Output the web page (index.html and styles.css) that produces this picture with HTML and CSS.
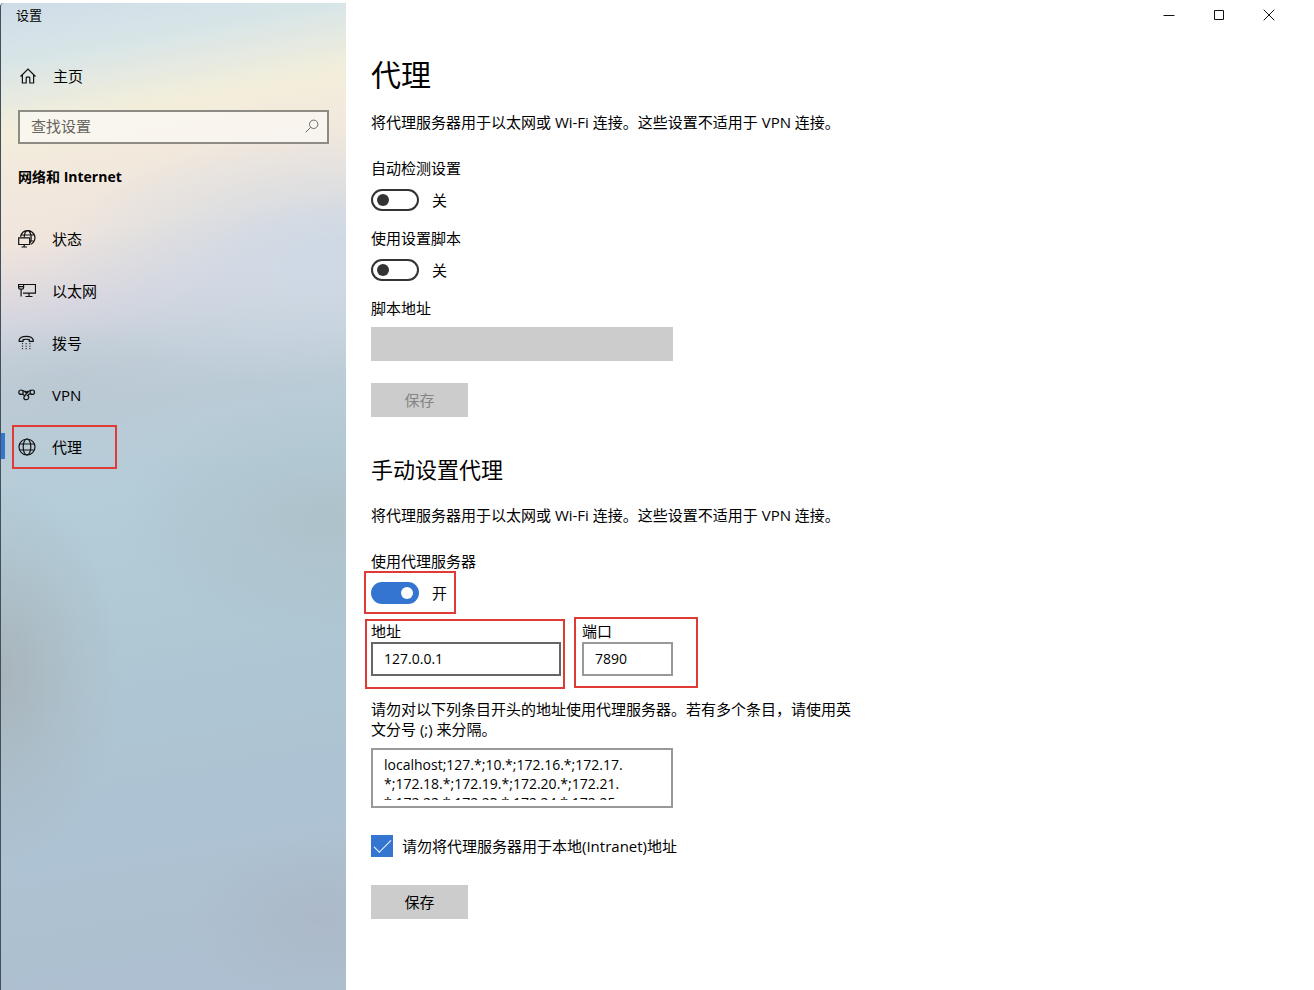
FILE: index.html
```html
<!DOCTYPE html>
<html lang="zh-CN">
<head>
<meta charset="UTF-8">
<meta name="viewport" content="width=device-width, initial-scale=1">
<title>设置</title>
<link rel="stylesheet" href="styles.css">
</head>
<body>
<div class="window">
  <aside class="sidebar">
    <div class="app-title">设置</div>
    <a class="nav-item home" href="#home">
      <svg class="icon" viewBox="0 0 18 18"><path d="M1.500 9.500 9 2l7.500 7.500M3.400 8v8h3.800v-5q0-.8.8-.8h2q.8 0 .8.8v5h3.800V8"/></svg>
      <span>主页</span>
    </a>
    <div class="search">
      <input type="text" placeholder="查找设置" aria-label="查找设置">
      <svg class="search-icon" viewBox="0 0 14 14"><circle cx="8.700" cy="5.300" r="4.200"/><path d="M5.700 8.300.7 13.300"/></svg>
    </div>
    <h2 class="group-title">网络和 Internet</h2>
    <nav class="nav">
      <a class="nav-item" href="#status">
        <svg class="icon" viewBox="0 0 18 18"><path d="M2.600 6.800A7.200 7.200 0 1 1 13 14.200M3.200 5h13M11.800 11h4.400M6.200 7.500C6.400 3.500 8 .6 9.700.6s3.500 3 3.500 7.200c0 2-.3 3.700-.9 5"/><path d="M.7 7.800h11v6.700H.7zM6.200 14.500v2.300M3.500 17h5.500"/></svg>
        <span>状态</span>
      </a>
      <a class="nav-item" href="#ethernet">
        <svg class="icon" viewBox="0 0 18 18"><path d="M6 2.500h11.500v8.700H5M11 11.200v3M7.500 14.500h7M.6 2.500h5v3q0 1.600-1.600 1.600H2.200Q.6 7.100.6 5.500zM.6 4.600h5M3.100 7v7.500"/></svg>
        <span>以太网</span>
      </a>
      <a class="nav-item" href="#dialup">
        <svg class="icon" viewBox="0 0 18 18"><path d="M1.200 7.300V5.800C2 3.200 5 2.300 8.200 2.300s6.200.9 7 3.500v1.500h-3.900V5.700q-3.100-.9-6.200 0v1.600z"/><path class="dots" d="M3.900 9.700h1.200M7.600 9.700h1.200M11.300 9.700h1.200M3.900 12.200h1.200M7.600 12.200h1.200M11.300 12.200h1.200M3.900 14.700h1.200M7.600 14.700h1.200M11.300 14.700h1.200"/></svg>
        <span>拨号</span>
      </a>
      <a class="nav-item" href="#vpn">
        <svg class="icon" viewBox="0 0 18 18"><circle cx="3" cy="6.200" r="2.200"/><circle cx="14.300" cy="6.200" r="2.200"/><path d="M4.500 4.600C6.500 4 7 6.800 8.600 7.300M4.200 8.100c2 .2 1.600 2.100 2.800 1.300l4-4.200q1-1 2-.8M8.800 9.400q2.300 0 1.900 2.200c-.5 2.900-4.800 2.800-4.900.2q0-1.200 1.600-2.600M10 9.500q.8-2.300 3.200-1.500M7.300 5l1.200 1.300L9.700 5"/></svg>
        <span>VPN</span>
      </a>
      <a class="nav-item active" href="#proxy" aria-current="page">
        <svg class="icon" viewBox="0 0 18 18"><circle cx="9" cy="9" r="8"/><ellipse cx="9" cy="9" rx="3.800" ry="8"/><path d="M1.600 6h14.800M1.600 12h14.800"/></svg>
        <span>代理</span>
      </a>
    </nav>
  </aside>

  <main class="content">
    <div class="titlebar">
      <button type="button" aria-label="最小化"><svg viewBox="0 0 12 12"><path d="M.5 6.500h11"/></svg></button>
      <button type="button" aria-label="最大化"><svg viewBox="0 0 12 12"><path d="M1.500 1.500h9v9h-9z"/></svg></button>
      <button type="button" aria-label="关闭"><svg viewBox="0 0 12 12"><path d="m.7.7 10.600 10.600M11.300.7.7 11.300"/></svg></button>
    </div>

    <form class="page">
      <h1>代理</h1>
      <p class="intro">将代理服务器用于以太网或 Wi-Fi 连接。这些设置不适用于 VPN 连接。</p>

      <div class="field first">
        <label for="auto-detect">自动检测设置</label>
        <div class="switch-row"><input type="checkbox" class="switch" id="auto-detect"><span>关</span></div>
      </div>
      <div class="field">
        <label for="use-script">使用设置脚本</label>
        <div class="switch-row"><input type="checkbox" class="switch" id="use-script"><span>关</span></div>
      </div>
      <div class="field">
        <label for="script-url">脚本地址</label>
        <input type="text" class="textbox script-url" id="script-url" disabled>
      </div>
      <button type="button" class="btn" disabled>保存</button>

      <h2>手动设置代理</h2>
      <p class="intro manual">将代理服务器用于以太网或 Wi-Fi 连接。这些设置不适用于 VPN 连接。</p>

      <div class="field first">
        <label for="use-proxy">使用代理服务器</label>
        <div class="switch-row marked mark-switch"><input type="checkbox" class="switch" id="use-proxy" checked><span>开</span></div>
      </div>
      <div class="address-row">
        <div class="address marked mark-address">
          <label for="address">地址</label>
          <input type="text" class="textbox hover" id="address" value="127.0.0.1">
        </div>
        <div class="port marked mark-port">
          <label for="port">端口</label>
          <input type="text" class="textbox" id="port" value="7890">
        </div>
      </div>

      <label class="bypass-label" for="bypass">请勿对以下列条目开头的地址使用代理服务器。若有多个条目，请使用英文分号 (;) 来分隔。</label>
      <div class="bypass">
        <textarea id="bypass" spellcheck="false">localhost;127.*;10.*;172.16.*;172.17.
*;172.18.*;172.19.*;172.20.*;172.21.
*;172.22.*;172.23.*;172.24.*;172.25.</textarea>
      </div>

      <div class="check-row">
        <input type="checkbox" class="check" id="local" checked>
        <label for="local">请勿将代理服务器用于本地(Intranet)地址</label>
      </div>
      <button type="button" class="btn save">保存</button>
    </form>
  </main>
</div>
</body>
</html>
```
FILE: styles.css
```css
*, *::before, *::after {
  box-sizing: border-box;
}
body {
  margin: 0;
  background: #fff;
  color: #000;
  font: 15px/20px "Open Sans", "Noto Sans CJK SC", sans-serif;
}
h1, h2, p {
  margin: 0;
  font-weight: normal;
}
input, textarea, button {
  font: inherit;
  color: inherit;
  margin: 0;
}
label {
  display: block;
}

.window {
  display: flex;
  min-height: 100vh;
}

/* sidebar */
.sidebar {
  flex: none;
  width: 346px;
  margin-top: 3px;
  border-left: 1px solid #43505c;
  border-top-left-radius: 4px;
  background:
    radial-gradient(ellipse 120px 190px at 0 670px, rgba(166, 172, 176, .7), rgba(166, 172, 176, .3) 50%, rgba(166, 172, 176, 0)),
    radial-gradient(ellipse 200px 120px at 320px 515px, rgba(170, 184, 190, .5), rgba(170, 184, 190, 0)),
    radial-gradient(ellipse 130px 80px at 320px 915px, rgba(170, 178, 190, .5), rgba(170, 178, 190, 0)),
    radial-gradient(ellipse 160px 60px at 60px 380px, rgba(180, 194, 204, .4), rgba(180, 194, 204, 0)),
    radial-gradient(ellipse 300px 130px at 346px 255px, rgba(206, 217, 229, 1) 10%, rgba(206, 217, 229, 0)),
    linear-gradient(170deg, #cfdce8 0, #d8e5e7 60px, #f3eedb 125px, #f2e9dd 175px, #f0e5dc 240px, #d9d7df 305px, #c5d0da 355px, #bbcbd6 415px, #b4cdd9 500px, #afc8d4 650px, #adc3d3 800px, #adbfd0 1000px);
}
.app-title {
  padding: 2px 15px;
  font-size: 13px;
}
.nav-item {
  display: flex;
  align-items: center;
  gap: 16px;
  height: 52px;
  padding-left: 17px;
  color: #000;
  text-decoration: none;
  position: relative;
}
.home {
  margin: 23px 0 8px;
  padding-left: 18px;
}
.icon {
  width: 18px;
  height: 18px;
  fill: none;
  stroke: #111;
  stroke-width: 1.2;
}
.search {
  display: flex;
  align-items: center;
  height: 34px;
  margin: 0 17px;
  padding: 0 8px 2px 11px;
  border: 2px solid #8d8b83;
  background: rgba(255, 255, 255, .5);
}
.search input {
  flex: 1;
  min-width: 0;
  padding: 0;
  border: 0;
  background: none;
  outline: none;
}
.search input::placeholder {
  color: #66645f;
}
.search-icon {
  width: 14px;
  height: 14px;
  fill: none;
  stroke: #6c6a66;
}
.group-title {
  margin: 23px 17px 26px;
  font-size: 14px;
  font-weight: bold;
}
.active::before {
  content: "";
  position: absolute;
  left: 0;
  top: 12px;
  width: 4px;
  height: 26px;
  background: #3375d0;
}
.active::after {
  content: "";
  position: absolute;
  left: 11px;
  top: 4px;
  width: 105px;
  height: 44px;
  border: 2px solid #e03a36;
}
.dots {
  stroke-width: 1;
}

/* window buttons */
.titlebar {
  display: flex;
  justify-content: flex-end;
  padding-right: 20px;
}
.titlebar button {
  display: grid;
  place-items: center;
  width: 50px;
  height: 30px;
  padding: 0;
  border: 0;
  background: none;
}
.titlebar svg {
  width: 12px;
  height: 12px;
  fill: none;
  stroke: #111;
}

/* page */
.content {
  flex: 1;
  min-width: 0;
}
.page {
  padding: 25px;
}
h1 {
  font-size: 30px;
  line-height: 40px;
}
.page h2 {
  margin-top: 37px;
  font-size: 22px;
  line-height: 30px;
}
.intro {
  margin-top: 17px;
}
.manual {
  margin-top: 21px;
}
.field {
  margin-top: 17px;
}
.first {
  margin-top: 26px;
}
.switch-row {
  display: flex;
  align-items: center;
  gap: 13px;
  width: max-content;
  margin-top: 11px;
}
.switch {
  appearance: none;
  display: flex;
  align-items: center;
  width: 48px;
  height: 22px;
  padding: 0 4px;
  border: 2px solid #333;
  border-radius: 11px;
}
.switch::before {
  content: "";
  width: 12px;
  height: 12px;
  border-radius: 50%;
  background: #333;
}
.switch:checked {
  justify-content: flex-end;
  border-color: #3375d0;
  background: #3375d0;
}
.switch:checked::before {
  background: #fff;
}
.textbox {
  display: block;
  width: 100%;
  height: 34px;
  margin-top: 1px;
  padding: 0 11px 2px;
  border: 2px solid #999;
  background: #fff;
  font-size: 14px;
}
.hover {
  border-color: #666;
}
.script-url {
  max-width: 302px;
  margin-top: 9px;
}
.textbox:disabled {
  border-color: #ccc;
  background: #ccc;
}
.btn {
  display: block;
  width: 97px;
  height: 34px;
  margin-top: 22px;
  padding: 0;
  border: 0;
  background: #ccc;
}
.btn:disabled {
  color: #858585;
}
.save {
  margin-top: 28px;
}
.address-row {
  display: flex;
  gap: 21px;
  margin-top: 17px;
}
.address {
  width: 190px;
}
.port {
  width: 91px;
}
.bypass-label {
  max-width: 490px;
  margin-top: 23px;
}
.bypass {
  max-width: 302px;
  margin-top: 9px;
  padding: 5px 11px 6px;
  border: 2px solid #999;
}
.bypass textarea {
  display: block;
  width: 100%;
  height: 45px;
  padding: 0;
  border: 0;
  outline: none;
  resize: none;
  overflow: hidden;
  white-space: pre;
  font-size: 14px;
  line-height: 19px;
}
.check-row {
  display: flex;
  align-items: center;
  gap: 9px;
  margin-top: 27px;
}
.check {
  appearance: none;
  display: grid;
  place-items: center;
  width: 22px;
  height: 22px;
  border: 2px solid #333;
}
.check:checked {
  border-color: #3375d0;
  background: #3375d0;
}
.check:checked::before {
  content: "";
  width: 17px;
  height: 8px;
  border: solid #fff;
  border-width: 0 0 1px 1px;
  transform: translateY(-2px) rotate(-45deg);
}

/* red frames round the settings to change */
.marked {
  position: relative;
}
.marked::after {
  content: "";
  position: absolute;
  border: 2px solid #e03a36;
  pointer-events: none;
}
.mark-switch::after {
  inset: -11px -9px -10px -7px;
}
.mark-address::after {
  inset: -2px -4px -13px -6px;
}
.mark-port::after {
  inset: -4px -25px -12px -8px;
}
```
